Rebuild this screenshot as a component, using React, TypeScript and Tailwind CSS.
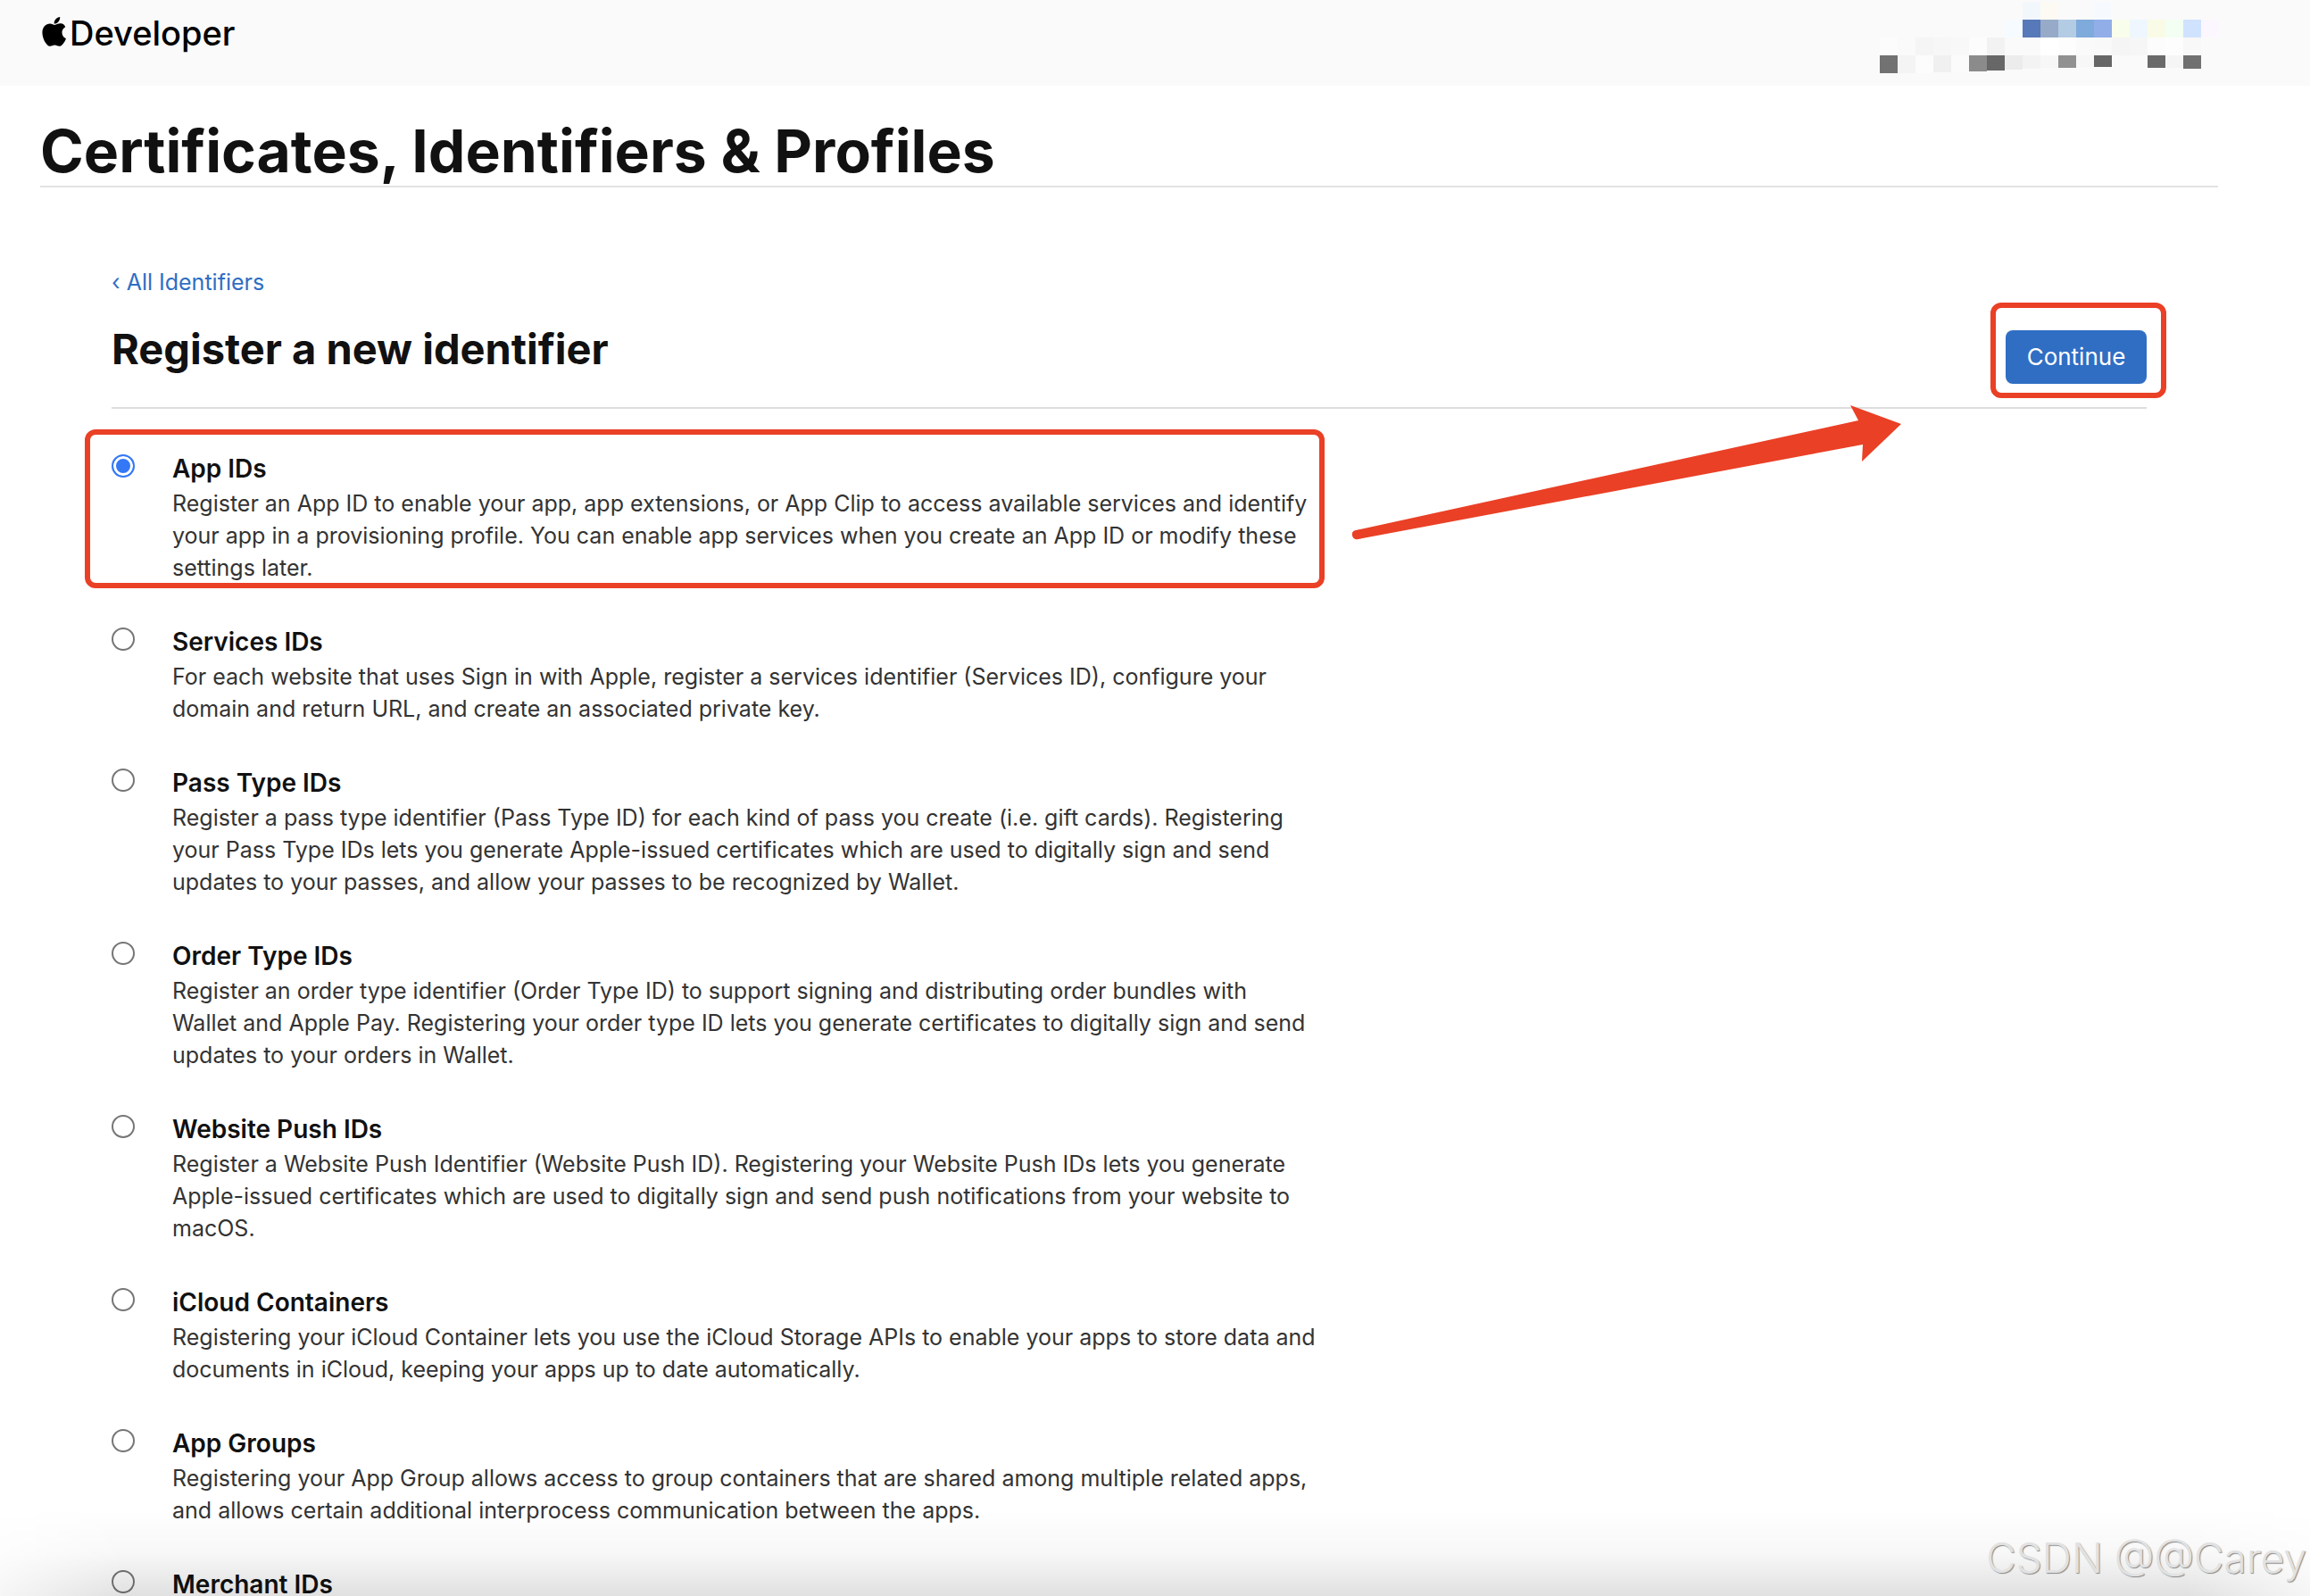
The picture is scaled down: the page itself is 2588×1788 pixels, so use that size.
import { useState } from 'react'

const identifiers = [
  {
    id: 'app-ids',
    title: 'App IDs',
    lines: [
      'Register an App ID to enable your app, app extensions, or App Clip to access available services and identify',
      'your app in a provisioning profile. You can enable app services when you create an App ID or modify these',
      'settings later.',
    ],
  },
  {
    id: 'services-ids',
    title: 'Services IDs',
    lines: [
      'For each website that uses Sign in with Apple, register a services identifier (Services ID), configure your',
      'domain and return URL, and create an associated private key.',
    ],
  },
  {
    id: 'pass-type-ids',
    title: 'Pass Type IDs',
    lines: [
      'Register a pass type identifier (Pass Type ID) for each kind of pass you create (i.e. gift cards). Registering',
      'your Pass Type IDs lets you generate Apple-issued certificates which are used to digitally sign and send',
      'updates to your passes, and allow your passes to be recognized by Wallet.',
    ],
  },
  {
    id: 'order-type-ids',
    title: 'Order Type IDs',
    lines: [
      'Register an order type identifier (Order Type ID) to support signing and distributing order bundles with',
      'Wallet and Apple Pay. Registering your order type ID lets you generate certificates to digitally sign and send',
      'updates to your orders in Wallet.',
    ],
  },
  {
    id: 'website-push-ids',
    title: 'Website Push IDs',
    lines: [
      'Register a Website Push Identifier (Website Push ID). Registering your Website Push IDs lets you generate',
      'Apple-issued certificates which are used to digitally sign and send push notifications from your website to',
      'macOS.',
    ],
  },
  {
    id: 'icloud-containers',
    title: 'iCloud Containers',
    lines: [
      'Registering your iCloud Container lets you use the iCloud Storage APIs to enable your apps to store data and',
      'documents in iCloud, keeping your apps up to date automatically.',
    ],
  },
  {
    id: 'app-groups',
    title: 'App Groups',
    lines: [
      'Registering your App Group allows access to group containers that are shared among multiple related apps,',
      'and allows certain additional interprocess communication between the apps.',
    ],
  },
  { id: 'merchant-ids', title: 'Merchant IDs', lines: [] },
]

// [column, row, fill, height]
const mosaic: [number, number, string, number][] = [
  [8, 0, '#f2f7fc', 20],
  [9, 0, '#fdf9f3', 20],
  [12, 0, '#f6faff', 20],
  [7, 1, '#f5fbff', 20],
  [8, 1, '#5778b9', 20],
  [9, 1, '#97abc8', 20],
  [10, 1, '#b4cbe4', 20],
  [11, 1, '#7faadc', 20],
  [12, 1, '#91aee9', 20],
  [13, 1, '#f9fdeb', 20],
  [14, 1, '#eef7ff', 20],
  [15, 1, '#f9fbe6', 20],
  [16, 1, '#f3fff3', 20],
  [17, 1, '#d0e3fe', 20],
  [18, 1, '#fcf7ff', 20],
  [0, 2, '#fcfcfc', 20],
  [2, 2, '#f5f5f5', 20],
  [3, 2, '#f7f7f7', 20],
  [4, 2, '#f8f8f8', 20],
  [5, 2, '#fcfcfc', 20],
  [6, 2, '#f2f2f2', 20],
  [9, 2, '#ffffff', 20],
  [10, 2, '#fdfdfd', 20],
  [12, 2, '#f9f9f9', 20],
  [13, 2, '#f5f5f5', 20],
  [14, 2, '#f6f6f6', 20],
  [15, 2, '#fcfcfc', 20],
  [16, 2, '#fdfdfd', 20],
  [17, 2, '#f8f8f8', 20],
  [0, 3, '#727272', 20],
  [1, 3, '#f4f4f4', 20],
  [2, 3, '#fcfcfc', 20],
  [3, 3, '#f0f0f0', 19],
  [4, 3, '#fbfbfb', 19],
  [5, 3, '#8b8b8b', 18],
  [6, 3, '#676767', 17],
  [7, 3, '#ececec', 16],
  [8, 3, '#f3f3f3', 15],
  [9, 3, '#f7f7f7', 14],
  [10, 3, '#919191', 14],
  [11, 3, '#f7f7f7', 13],
  [12, 3, '#666666', 13],
  [15, 3, '#6a6a6a', 14],
  [16, 3, '#f5f5f5', 14],
  [17, 3, '#707070', 15],
]

export default function App() {
  const [selected, setSelected] = useState('app-ids')

  return (
    <div className="relative h-screen overflow-hidden bg-white font-[Inter,sans-serif] text-[#111]">
      {/* Header */}
      <header className="flex h-24 justify-between bg-[#fafafa] pr-[102px] pl-[47px]">
        <a href="#" className="flex h-[74px] items-center gap-1 text-black">
          <svg viewBox="0 0 27 33" className="mb-1 h-[33px] w-[27px]" fill="currentColor" aria-hidden="true">
            <path d="M20.2 0c.2 2-.6 3.900-1.700 5.300-1.200 1.400-3 2.500-4.900 2.300-.2-1.900.7-3.900 1.800-5.100C16.600 1.100 18.600.1 20.200 0z" />
            <path d="M26.200 11.200c-.2.100-3.700 2.100-3.700 6.300 0 4.900 4.300 6.600 4.400 6.700 0 .1-.7 2.300-2.300 4.600-1.400 2-2.800 4-5 4s-2.800-1.300-5.300-1.300c-2.500 0-3.400 1.300-5.400 1.300s-3.500-1.900-5-4.100C2 26 .4 21.600.4 17.500c0-6.600 4.300-10.100 8.500-10.100 2.300 0 4.100 1.500 5.500 1.500 1.400 0 3.500-1.600 6.100-1.600 1 0 4.500.1 5.700 3.900z" />
          </svg>
          <span className="text-[38px] leading-[46px] font-medium">Developer</span>
        </a>
        <svg viewBox="0 0 380 82" className="h-[82px] w-[380px]" shapeRendering="crispEdges" aria-hidden="true">
          {mosaic.map(([col, row, fill, height]) => (
            <rect key={`${col}-${row}`} x={col * 20} y={row * 20 + 2} width="20" height={height} fill={fill} />
          ))}
        </svg>
      </header>

      <main className="pr-[103px] pl-[45px]">
        <h1 className="border-b-2 border-[#e3e3e3] pt-[34px] text-[66px] leading-[78px] font-bold">
          Certificates, Identifiers &amp; Profiles
        </h1>

        <div className="relative px-20 pt-[88px]">
          <a href="#" className="text-[25px] leading-9 text-[#2f6ec3]">
            ‹ All Identifiers
          </a>

          {/* Title bar */}
          <div className="flex items-start justify-between border-b-2 border-[#ddd] pt-7 pb-[26px]">
            <h2 className="text-[47px] leading-[58px] font-bold">Register a new identifier</h2>
            <div className="relative mt-2">
              <button className="block h-[60px] w-[158px] rounded-lg bg-[#2f6ec3] pb-0.5 text-[26px] text-white">
                Continue
              </button>
              <div className="pointer-events-none absolute -top-[31px] -right-[22px] -bottom-4 -left-[17px] rounded-xl border-6 border-[#ea4026]" />
            </div>
          </div>

          {/* Identifier types */}
          <fieldset aria-label="Identifier type" className="relative pt-[51px]">
            {identifiers.map((item) => (
              <div key={item.id} className="flex items-start gap-[42px] pb-[49px]">
                <input
                  type="radio"
                  name="identifier"
                  id={item.id}
                  checked={selected === item.id}
                  onChange={() => setSelected(item.id)}
                  className="size-[26px] shrink-0 appearance-none rounded-full border-2 border-[#767676] bg-white checked:border-[#3478f6] checked:bg-[#3478f6] checked:shadow-[inset_0_0_0_3px_white]"
                />
                <label htmlFor={item.id} className="whitespace-nowrap">
                  <span className="mb-[5px] block text-[28px] leading-8 font-semibold">{item.title}</span>
                  {item.lines.map((line) => (
                    <span key={line} className="block text-[25px] leading-9 text-[#333]">
                      {line}
                    </span>
                  ))}
                </label>
              </div>
            ))}
            <div className="pointer-events-none absolute top-[23px] -left-[30px] h-[178px] w-[1389px] rounded-xl border-6 border-[#ea4026]" />
          </fieldset>

          <svg
            viewBox="0 0 616 152"
            className="pointer-events-none absolute top-[244px] right-[355px] h-[152px] w-[616px]"
            fill="#ea4026"
            aria-hidden="true"
          >
            <path d="M5 140 568 17 559 0 616 21 572 63 573 44 8 150Q2 151 1 146 0 141 5 140z" />
          </svg>
        </div>
      </main>

      {/* Bottom shade, weaker at both corners */}
      <div className="pointer-events-none absolute inset-x-0 bottom-0 h-24 bg-linear-to-b from-transparent via-black/3 to-black/12 [mask-image:linear-gradient(to_right,rgba(0,0,0,0.3),#000_140px,#000_calc(100%-140px),rgba(0,0,0,0.3))]" />
      <div className="pointer-events-none absolute right-1 bottom-5 text-[46px] leading-none font-light text-[#e2e2e2] [text-shadow:1px_1px_1px_#888]">
        CSDN @@Carey
      </div>
    </div>
  )
}
